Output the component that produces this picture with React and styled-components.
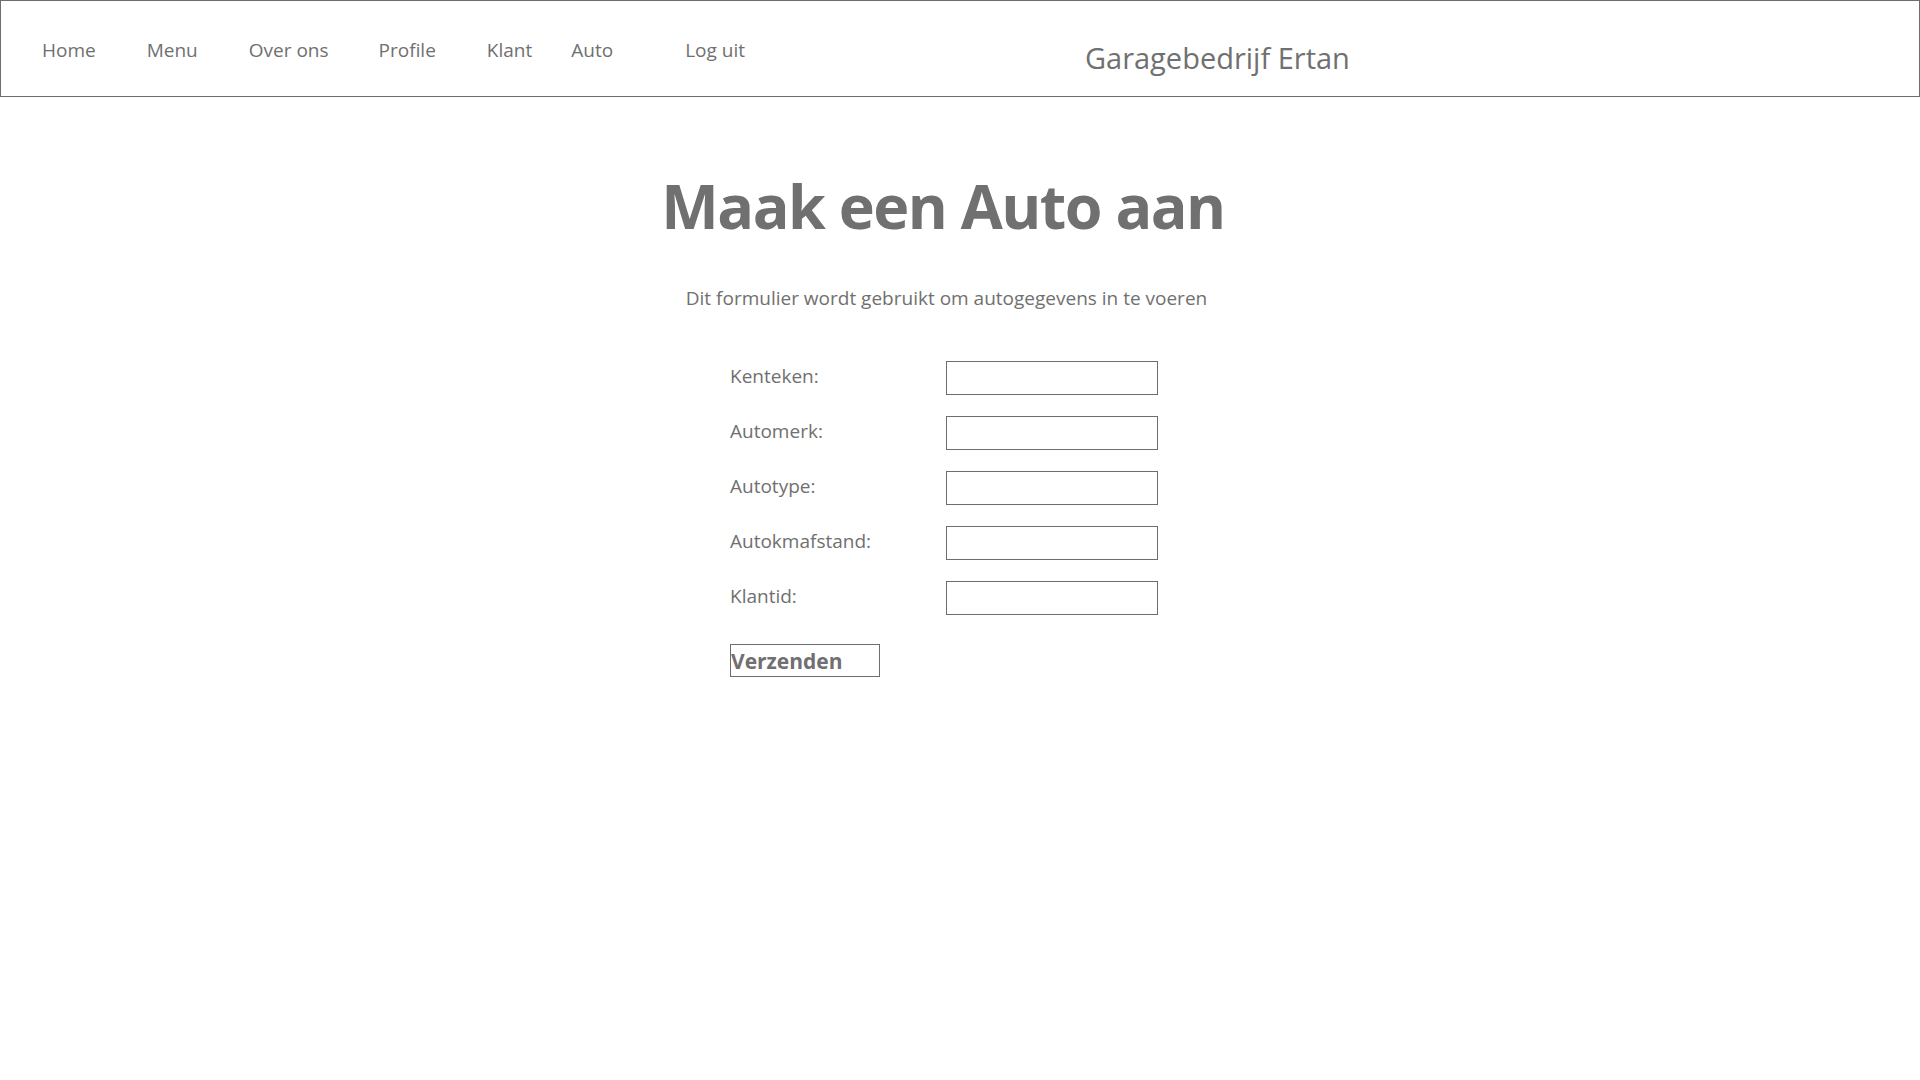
import React from 'react';
import styled, { createGlobalStyle } from 'styled-components';

const GlobalStyle = createGlobalStyle`
  html, body {
    margin: 0;
    padding: 0;
    background: #fff;
  }
  body {
    font-family: "Segoe UI", "Open Sans", "Noto Sans", sans-serif;
    color: #707070;
  }
`;

const navItems = [
  { label: 'Home', gap: 0 },
  { label: 'Menu', gap: 51 },
  { label: 'Over ons', gap: 51 },
  { label: 'Profile', gap: 50 },
  { label: 'Klant', gap: 51 },
  { label: 'Auto', gap: 39 },
  { label: 'Log uit', gap: 72 },
];

const fields = ['Kenteken', 'Automerk', 'Autotype', 'Autokmafstand', 'Klantid'];

const App = () => {
  return (
    <>
      <GlobalStyle />
      <Header>
        <Nav>
          {navItems.map((item) => (
            <NavLink key={item.label} href="#" $gap={item.gap}>
              {item.label}
            </NavLink>
          ))}
        </Nav>
        <Brand>Garagebedrijf Ertan</Brand>
      </Header>
      <Main>
        <Title>Maak een Auto aan</Title>
        <Intro>Dit formulier wordt gebruikt om autogegevens in te voeren</Intro>
        <Form onSubmit={(e) => e.preventDefault()}>
          {fields.map((name) => (
            <Row key={name}>
              <Label htmlFor={name}>{name}:</Label>
              <Input id={name} type="text" />
            </Row>
          ))}
          <SubmitButton type="submit">Verzenden</SubmitButton>
        </Form>
      </Main>
    </>
  );
};

const Header = styled.header`
  box-sizing: border-box;
  width: 1920px;
  height: 97px;
  border: 1px solid #6e6e6e;
  display: flex;
  align-items: center;
  padding-left: 41px;
`;

const Nav = styled.nav`
  display: flex;
  align-items: center;
  padding-top: 2px;
`;

const NavLink = styled.a`
  margin-left: ${(props) => props.$gap}px;
  font-size: 19px;
  color: #707070;
  text-decoration: none;
  white-space: nowrap;
`;

const Brand = styled.h2`
  margin: 0 0 0 340px;
  padding-top: 18px;
  font-size: 29px;
  font-weight: 400;
  color: #707070;
  white-space: nowrap;
`;

const Main = styled.main`
  display: flex;
  flex-direction: column;
  align-items: center;
  padding-right: 34px;
`;

const Title = styled.h1`
  margin: 69px 0 0;
  font-size: 61px;
  font-weight: 700;
  letter-spacing: -1.5px;
  line-height: 1.3;
  color: #707070;
`;

const Intro = styled.p`
  margin: 40px 0 0 7px;
  font-size: 19px;
  line-height: 26px;
`;

const Form = styled.form`
  margin: 50px 0 0 2px;
  display: flex;
  flex-direction: column;
  gap: 21px;
  width: 428px;
`;

const Row = styled.div`
  display: grid;
  grid-template-columns: 216px 212px;
  align-items: start;
`;

const Label = styled.label`
  font-size: 19px;
  line-height: 30px;
  color: #707070;
`;

const Input = styled.input`
  box-sizing: border-box;
  width: 212px;
  height: 34px;
  border: 1px solid #6e6e6e;
  margin: 0;
  padding: 2px 6px;
  font-family: inherit;
  font-size: 16px;
  outline: none;
`;

const SubmitButton = styled.button`
  box-sizing: border-box;
  margin-top: 8px;
  width: 150px;
  height: 33px;
  padding: 0;
  border: 1px solid #6e6e6e;
  background: #fff;
  text-align: left;
  font-family: inherit;
  font-size: 21px;
  font-weight: 700;
  color: #707070;
  cursor: pointer;
`;

export default App;
